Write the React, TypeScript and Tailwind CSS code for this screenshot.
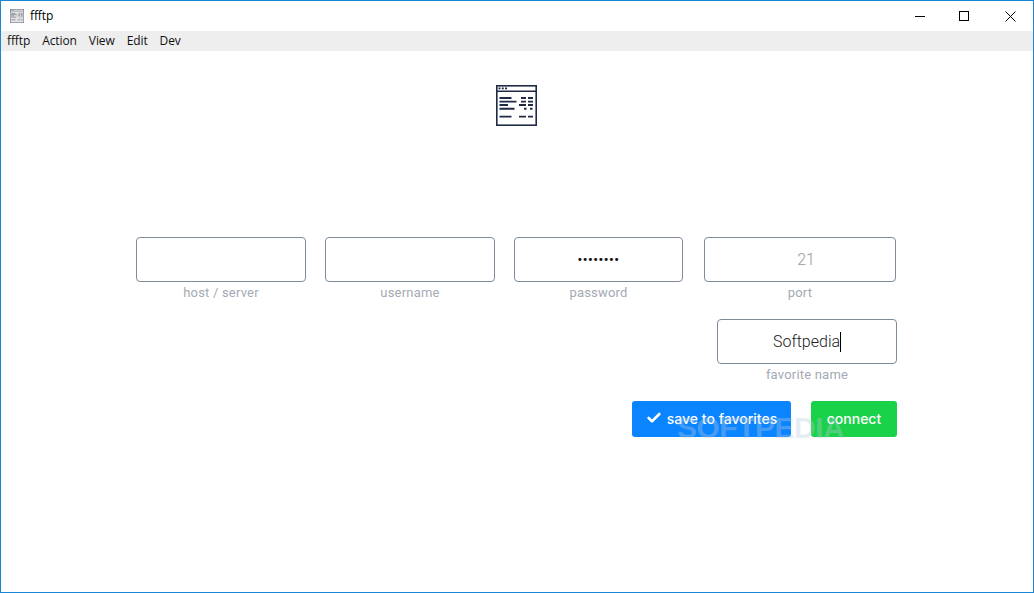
import { Check } from "lucide-react";

const ui = "font-['Open_Sans','Noto_Sans',sans-serif]";
const roboto = "font-['Roboto',sans-serif]";

function WindowIcon({ className }: { className: string }) {
  // little terminal/window logo, same drawing for titlebar and page
  return (
    <svg viewBox="0 0 41 41" className={className} fill="none" stroke="#1f2a44">
      <rect x="0.8" y="0.8" width="39.4" height="39.4" strokeWidth="1.6" />
      <path d="M1 6.2H40" strokeWidth="1.6" />
      <path d="M2.5 3.3H4.5M5.8 3.3H7.8M9 3.3H11" strokeWidth="1.8" />
      <path
        d="M3.5 13H15.5M25 13H30M32 13H37M3.5 16.6H20.5M25 16.6H30M32 16.6H37M3.5 20H12M23 20H30M32 20H37M3.5 23.8H18.5M28 23.8H30.5M34 23.8H36.5M3.5 31.6H15.5M23 31.6H30M32 31.6H37"
        strokeWidth="1.9"
      />
    </svg>
  );
}

function Field({ label, className, children }: { label: string; className: string; children?: React.ReactNode }) {
  return (
    <div className={`flex flex-col items-center ${className}`}>
      <div className={`flex h-[45px] w-full items-center justify-center rounded-[4px] border border-[#7f8b9b] bg-white text-[16px] ${roboto}`}>
        {children}
      </div>
      <span className={`mt-[3px] text-[13px] leading-[16px] tracking-[0.2px] text-[#a3aab5] ${roboto}`}>{label}</span>
    </div>
  );
}

export default function App() {
  return (
    <div className="relative flex h-[593px] w-[1034px] flex-col overflow-hidden border border-[#1a86d8] bg-white">
      {/* titlebar */}
      <div className="flex h-[30px] shrink-0 items-center">
        <div className="ml-[9px] flex h-[14px] w-[14px] items-center justify-center bg-[#e2e2e2]">
          <WindowIcon className="h-[14px] w-[14px] opacity-60" />
        </div>
        <span className={`ml-[6px] text-[12px] tracking-[-0.1px] text-black ${ui}`}>ffftp</span>
        <div className="ml-auto flex items-center">
          <div className="flex h-[30px] w-[45px] items-center justify-center">
            <svg width="10" height="10" viewBox="0 0 10 10" stroke="#000" fill="none">
              <path d="M0 5.5H10" />
            </svg>
          </div>
          <div className="flex h-[30px] w-[45px] items-center justify-center pr-[2px]">
            <svg width="10" height="10" viewBox="0 0 10 10" stroke="#000" fill="none">
              <rect x="0.5" y="0.5" width="9" height="9" />
            </svg>
          </div>
          <div className="flex h-[30px] w-[46px] items-center justify-center">
            <svg width="11" height="11" viewBox="0 0 11 11" stroke="#000" fill="none">
              <path d="M0.5 0.5L10.5 10.5M10.5 0.5L0.5 10.5" />
            </svg>
          </div>
        </div>
      </div>

      {/* menu */}
      <div className={`flex h-[20px] shrink-0 items-center gap-[12px] bg-[#eeeeee] pl-[6px] text-[12px] tracking-[-0.1px] text-[#111] ${ui}`}>
        <span>ffftp</span>
        <span>Action</span>
        <span>View</span>
        <span>Edit</span>
        <span>Dev</span>
      </div>

      <div className="flex justify-center pt-[34px] pr-[1px]">
        <WindowIcon className="h-[41px] w-[41px]" />
      </div>

      {/* form */}
      <div className="flex flex-col pt-[111px] pl-[135px]">
        <div className="flex">
          <Field label="host / server" className="w-[170px]" />
          <Field label="username" className="ml-[19px] w-[170px]" />
          <Field label="password" className="ml-[19px] w-[169px]">
            <span className="text-[13px] font-bold leading-none tracking-[0.6px] text-[#111]">••••••••</span>
          </Field>
          <Field label="port" className="ml-[21px] w-[192px]">
            <span className="pl-[12px] font-light text-[#999]">21</span>
          </Field>
        </div>
        <div className="mt-[18px] flex justify-end pr-[136px]">
          <Field label="favorite name" className="w-[180px]">
            <span className="border-r border-black leading-[20px] font-light text-[#222]">Softpedia</span>
          </Field>
        </div>
        <div className="mt-[18px] flex justify-end gap-[20px] pr-[136px] font-['Inter',sans-serif] text-[14px] font-medium text-white">
          <div className="flex h-[36px] w-[159px] items-center justify-center gap-[5px] rounded-[3px] bg-[#0a84ff] pb-[2px]">
            <Check size={16} strokeWidth={4} />
            <span>save to favorites</span>
          </div>
          <div className="flex h-[36px] w-[86px] items-center justify-center rounded-[3px] bg-[#1ad14a] pb-[2px]">connect</div>
        </div>
      </div>

      {/* watermark */}
      <span className="absolute left-[676px] top-[405px] font-['Liberation_Sans',sans-serif] text-[30px] font-bold leading-[44px] tracking-[-0.5px] text-[#b9cbdc]/35">
        SOFTPEDIA
      </span>
    </div>
  );
}
